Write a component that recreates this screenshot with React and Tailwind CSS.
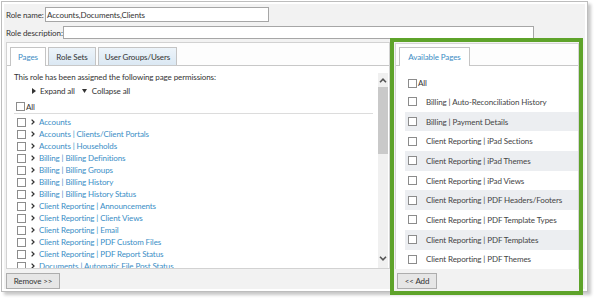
import React from "react";

const leftItems = [
  "Accounts",
  "Accounts | Clients/Client Portals",
  "Accounts | Households",
  "Billing | Billing Definitions",
  "Billing | Billing Groups",
  "Billing | Billing History",
  "Billing | Billing History Status",
  "Client Reporting | Announcements",
  "Client Reporting | Client Views",
  "Client Reporting | Email",
  "Client Reporting | PDF Custom Files",
  "Client Reporting | PDF Report Status",
  "Documents | Automatic File Post Status",
];

const rightItems = [
  "Billing | Auto-Reconciliation History",
  "Billing | Payment Details",
  "Client Reporting | iPad Sections",
  "Client Reporting | iPad Themes",
  "Client Reporting | iPad Views",
  "Client Reporting | PDF Headers/Footers",
  "Client Reporting | PDF Template Types",
  "Client Reporting | PDF Templates",
  "Client Reporting | PDF Themes",
];

function Box() {
  return <span className="block w-[9px] h-[9px] shrink-0 border border-[#8c8c8c] bg-white" />;
}

function Chevron() {
  return (
    <svg width="4" height="6" viewBox="0 0 4 6" className="shrink-0">
      <polyline points="0.6,0.6 3,3 0.6,5.4" fill="none" stroke="#333" strokeWidth="1.3" />
    </svg>
  );
}

export default function App() {
  return (
    <div
      className="w-[597px] h-[305px] bg-white text-[8px] leading-[12px] tracking-[-0.1px] text-[#333]"
      style={{ fontFamily: '"Segoe UI", Lato, sans-serif' }}
    >
      <div className="ml-[1px] mt-[1px] w-[587px] h-[291px] border border-[#bdbdbd] bg-white p-[2px] shadow-[3px_3px_3px_rgba(0,0,0,0.22)]">
        <div className="h-full bg-[#f2f2f2] px-[2px] pt-[3px]">
          {/* Role name */}
          <div className="flex h-[15px] items-center whitespace-nowrap">
            <span className="w-[39px] shrink-0">Role name:</span>
            <div className="flex h-[15px] w-[224px] items-center border border-[#a6a6a6] bg-white pl-[1px]">
              Accounts,Documents,Clients
            </div>
          </div>
          {/* Role description */}
          <div className="mt-[4px] flex h-[13px] items-center whitespace-nowrap">
            <span className="w-[57px] shrink-0">Role description:</span>
            <div className="h-[13px] w-[471px] border border-[#a6a6a6] bg-white" />
          </div>

          {/* Panels */}
          <div className="-mt-[1px] flex">
            {/* Left column */}
            <div className="w-[386px] pt-[4px]">
              <div className="flex h-[227px] flex-col border border-[#d2d2d2] bg-[#fdfdfd]">
                {/* tabs */}
                <div className="flex h-[23px] shrink-0 items-end gap-[2px] border-b border-[#c8c8c8] pl-[3px]">
                  <div className="-mb-[1px] flex h-[19px] w-[36px] items-center justify-center border border-b-0 border-[#c4c4c4] bg-white text-[#3d8cc4]">
                    Pages
                  </div>
                  <div className="flex h-[18px] w-[48px] items-center justify-center border border-b-0 border-[#c4c4c4] bg-gradient-to-b from-[#edf4fa] to-[#dbe8f3]">
                    Role Sets
                  </div>
                  <div className="flex h-[18px] w-[79px] items-center justify-center border border-b-0 border-[#c4c4c4] bg-gradient-to-b from-[#edf4fa] to-[#dbe8f3]">
                    User Groups/Users
                  </div>
                </div>
                {/* body */}
                <div className="flex min-h-0 flex-1 bg-white">
                  <div className="min-h-0 flex-1 overflow-hidden pl-[7px] pt-[5px]">
                    <div className="h-[12px] whitespace-nowrap">
                      This role has been assigned the following page permissions:
                    </div>
                    <div className="mt-[2px] flex h-[12px] items-center whitespace-nowrap">
                      <svg width="4" height="6" viewBox="0 0 4 6" className="ml-[18px] shrink-0">
                        <polygon points="0,0 4,3 0,6" fill="#333" />
                      </svg>
                      <span className="ml-[4px]">Expand all</span>
                      <svg width="5" height="4" viewBox="0 0 5 4" className="ml-[7px] shrink-0">
                        <polygon points="0,0 5,0 2.5,4" fill="#333" />
                      </svg>
                      <span className="ml-[5px]">Collapse all</span>
                    </div>
                    <div className="mt-[4px] flex h-[13px] w-[359px] items-center border-b border-[#dcdcdc] pb-[1px]">
                      <span className="ml-[2px]">
                        <Box />
                      </span>
                      <span className="ml-[1px]">All</span>
                    </div>
                    <div className="pt-[2px]">
                      {leftItems.map((t) => (
                        <div key={t} className="flex h-[12px] items-center whitespace-nowrap">
                          <span className="ml-[3px]">
                            <Box />
                          </span>
                          <span className="ml-[5px]">
                            <Chevron />
                          </span>
                          <span className="ml-[4px] text-[#3a8ec6]">{t}</span>
                        </div>
                      ))}
                    </div>
                  </div>
                  {/* fake scrollbar */}
                  <div className="mr-[1px] mt-[7px] flex w-[10px] shrink-0 flex-col bg-[#f0f0f0]">
                    <div className="flex h-[14px] items-center justify-center">
                      <svg width="8" height="5" viewBox="0 0 8 5">
                        <polyline points="1,4.2 4,1.2 7,4.2" fill="none" stroke="#555" strokeWidth="1.6" />
                      </svg>
                    </div>
                    <div className="h-[67px] bg-[#c9c9c9]" />
                    <div className="flex-1" />
                    <div className="flex h-[16px] items-start justify-center pt-[4px]">
                      <svg width="8" height="5" viewBox="0 0 8 5">
                        <polyline points="1,0.8 4,3.8 7,0.8" fill="none" stroke="#555" strokeWidth="1.6" />
                      </svg>
                    </div>
                  </div>
                </div>
              </div>
              <button className="mt-[4px] flex h-[16px] w-[54px] items-center justify-center whitespace-nowrap border border-[#adadad] bg-[#e6e6e6] text-[#333]">
                Remove &gt;&gt;
              </button>
            </div>

            {/* Right column (highlighted) */}
            <div className="h-[257px] w-[193px] shrink-0 border-4 border-[#5ea32a]">
              <div className="flex h-full flex-col bg-[#f2f2f2] pl-[1px] pt-[1px]">
                <div className="flex h-[226px] flex-col border border-[#d6d6d6] bg-[#fdfdfd]">
                  <div className="flex h-[22px] shrink-0 items-end border-b border-[#c8c8c8] pl-[3px]">
                    <div className="-mb-[1px] flex h-[19px] w-[71px] items-center justify-center whitespace-nowrap border border-b-0 border-[#c4c4c4] bg-white text-[#3d8cc4]">
                      Available Pages
                    </div>
                  </div>
                  <div className="flex-1 bg-white pt-[11px]">
                    <div className="flex h-[12px] items-center pl-[12px]">
                      <Box />
                      <span className="ml-[1px]">All</span>
                    </div>
                    <div className="mt-[3px] pl-[9px]">
                      {rightItems.map((t, i) => (
                        <div
                          key={t}
                          className={
                            "flex h-[19.7px] items-center whitespace-nowrap text-[#444] " +
                            (i % 2 === 1 ? "bg-[#eceef1]" : "bg-white")
                          }
                        >
                          <span className="ml-[3px]">
                            <Box />
                          </span>
                          <span className="ml-[9px]">{t}</span>
                        </div>
                      ))}
                    </div>
                  </div>
                </div>
                <button className="ml-[2px] mt-[4px] flex h-[16px] w-[40px] items-center justify-center whitespace-nowrap border border-[#adadad] bg-[#e6e6e6] text-[#333]">
                  &lt;&lt; Add
                </button>
              </div>
            </div>
          </div>
        </div>
      </div>
    </div>
  );
}
